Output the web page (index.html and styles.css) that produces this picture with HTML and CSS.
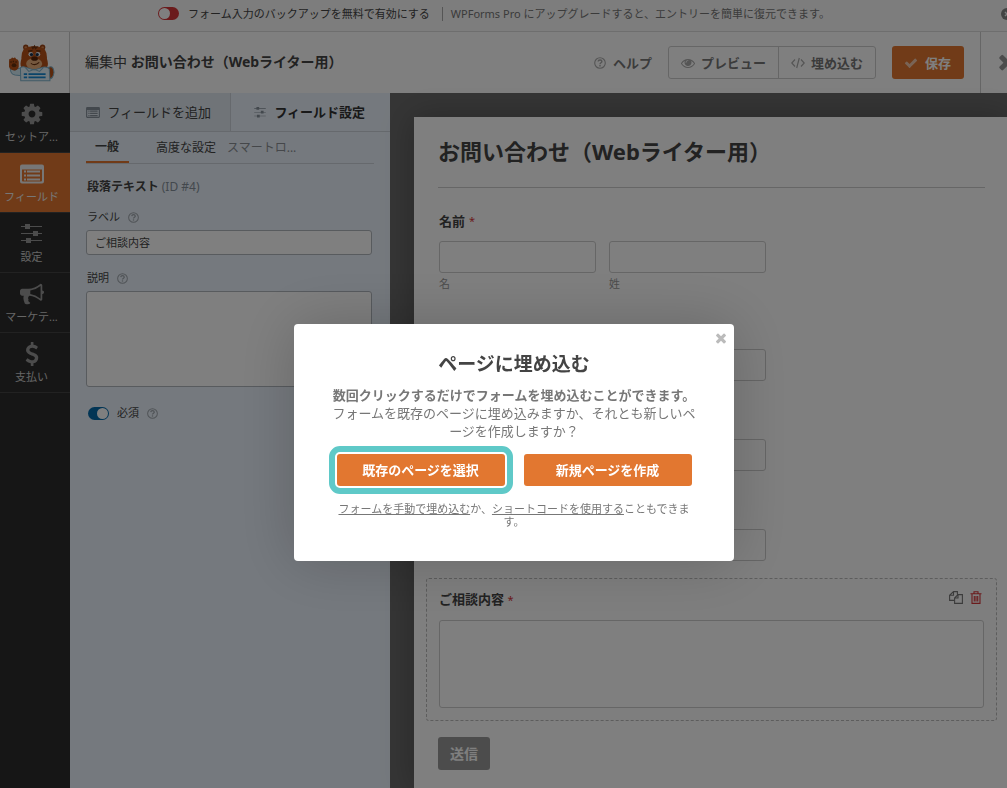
FILE: index.html
```html
<!DOCTYPE html>
<html lang="ja">
<head>
<meta charset="utf-8">
<meta name="viewport" content="width=device-width, initial-scale=1">
<title>お問い合わせ（Webライター用）</title>
<link rel="stylesheet" href="styles.css">
</head>
<body>
<svg class="sprite" aria-hidden="true">
  <symbol id="i-cog" viewBox="0 0 1792 1792"><path d="M1152 896q0-106-75-181t-181-75-181 75-75 181 75 181 181 75 181-75 75-181zm512-109v222q0 12-8 23t-20 13l-185 28q-19 54-39 91 35 50 107 138 10 12 10 25t-9 23q-27 37-99 108t-94 71q-12 0-26-9l-138-108q-44 23-91 38-16 136-29 186-7 28-36 28h-222q-14 0-24.5-8.5t-11.5-21.5l-28-184q-49-16-90-37l-141 107q-10 9-25 9-14 0-25-11-126-114-165-168-7-10-7-23 0-12 8-23 15-21 51-66.5t54-70.5q-27-50-41-99l-183-27q-13-2-21-12.5t-8-23.5v-222q0-12 8-23t19-13l186-28q14-46 39-92-40-57-107-138-10-12-10-24 0-10 9-23 26-36 98.5-107.5t94.5-71.5q13 0 26 10l138 107q44-23 91-38 16-136 29-186 7-28 36-28h222q14 0 24.5 8.5t11.5 21.5l28 184q49 16 90 37l142-107q9-9 24-9 13 0 25 10 129 119 165 170 7 8 7 22 0 12-8 23-15 21-51 66.5t-54 70.5q26 50 41 98l183 28q13 2 21 12.5t8 23.5z"/></symbol>
  <symbol id="i-usd" viewBox="0 0 1792 1792"><path d="M1362 1185q0 153-99.5 263.5t-258.5 136.5v175q0 14-9 23t-23 9h-135q-13 0-22.5-9.5t-9.5-22.5v-175q-66-9-127.5-31t-101.5-44.5-74-48-46.5-37.5-17.5-18q-17-21-2-41l103-135q7-10 23-12 15-2 24 9l2 2q113 99 243 125 37 8 74 8 81 0 142.5-43t61.5-122q0-28-15-53t-33.5-42-58.5-37.5-66-32-80-32.5q-39-16-61.5-25t-61.5-26.5-62.5-31-56.5-35.5-53.5-42.5-43.5-49-35.5-58-21-66.5-8.5-78q0-138 98-242t255-134v-180q0-13 9.5-22.5t22.5-9.5h135q14 0 23 9t9 23v176q57 6 110.5 23t87 33.5 63.5 37.5 39 29 15 14q17 18 5 38l-81 146q-8 15-23 16-14 3-27-7-3-3-14.5-12t-39-26.5-58.5-32-74.5-26-85.5-11.5q-95 0-155 43t-60 111q0 26 8.5 48t29.5 41.5 39.5 33 56 31 60.5 27 70 27.5q53 20 81 31.5t76 35 75.5 42.5 62 50 53 63.5 31.5 76.5 13 94z"/></symbol>
  <symbol id="i-horn" viewBox="0 0 1792 1792"><path d="M1664 640q53 0 90.5 37.5t37.5 90.5-37.5 90.5-90.5 37.5v384q0 52-38 90t-90 38q-417-347-812-380-58 19-91 66t-31 100.5 40 92.5q-20 33-23 65.5t6 58 33.5 55 48 50 61.5 50.5q-29 58-111.5 83t-168.5 11.5-132-55.5q-7-23-29.5-87.5t-32-94.5-23-89-15-101 3.5-98.5 22-110.5h-122q-66 0-113-47t-47-113v-192q0-66 47-113t113-47h480q435 0 896-384 52 0 90 38t38 90v384zm-128 604v-954q-394 302-768 343v270q377 42 768 341z"/></symbol>
  <symbol id="i-eye" viewBox="0 0 1792 1792"><path d="M1664 960q-152-236-381-353 61 104 61 225 0 185-131.500 316.500t-316.500 131.500-316.500-131.500-131.500-316.500q0-121 61-225-229 117-381 353 133 205 333.500 326.500t434.500 121.500 434.500-121.500 333.500-326.500zm-720-384q0-20-14-34t-34-14q-125 0-214.500 89.500t-89.500 214.500q0 20 14 34t34 14 34-14 14-34q0-86 61-147t147-61q20 0 34-14t14-34zm848 384q0 34-20 69-140 230-376.500 368.500t-499.500 138.500-499.500-139-376.500-368q-20-35-20-69t20-69q140-229 376.500-368t499.500-139 499.500 139 376.500 368q20 35 20 69z"/></symbol>
  <symbol id="i-check" viewBox="0 0 1792 1792"><path d="M1671 566q0 40-28 68l-724 724-136 136q-28 28-68 28t-68-28l-136-136-362-362q-28-28-28-68t28-68l136-136q28-28 68-28t68 28l294 295 656-657q28-28 68-28t68 28l136 136q28 28 28 68z"/></symbol>
  <symbol id="i-times" viewBox="300 300 1192 1300"><path d="M1490 1322q0 40-28 68l-136 136q-28 28-68 28t-68-28l-294-294-294 294q-28 28-68 28t-68-28l-136-136q-28-28-28-68t28-68l294-294-294-294q-28-28-28-68t28-68l136-136q28-28 68-28t68 28l294 294 294-294q28-28 68-28t68 28l136 136q28 28 28 68t-28 68l-294 294 294 294q28 28 28 68z"/></symbol>
  <symbol id="i-list" viewBox="0 0 24 19"><path fill-rule="evenodd" d="M2 0h20a2 2 0 0 1 2 2v15a2 2 0 0 1-2 2H2a2 2 0 0 1-2-2V2a2 2 0 0 1 2-2zM2 5v11q0 1 1 1h18q1 0 1-1V5z"/><path d="M4 6h2v2H4zM7 6h13v2H7zM4 10h2v2H4zM7 10h13v2H7zM4 14h2v2H4zM7 14h13v2H7z"/></symbol>
  <symbol id="i-sliders" viewBox="0 0 21 20"><path d="M0 2h21v1H0zM0 9h21v1H0zM0 16h21v1H0z"/><path d="M4 0h5v5H4zM12 7h5v5h-5zM5 14h5v5H5z"/></symbol>
  <symbol id="i-help" viewBox="0 0 12 12"><circle cx="6" cy="6" r="5.300" fill="none" stroke="currentColor" stroke-width="1.100"/><path d="M4.100 4.500C4.300 2.400 7.900 2.500 7.900 4.500 7.900 5.800 6 5.700 6 7.200" fill="none" stroke="currentColor" stroke-width="1.400"/><path d="M5.300 8h1.400v1.400H5.300z"/></symbol>
  <symbol id="i-code" viewBox="0 0 14 12"><path d="M4 2.500.8 6 4 9.500M10 2.500 13.200 6 10 9.500M8.300 1 5.700 11" fill="none" stroke="currentColor" stroke-width="1.200"/></symbol>
  <symbol id="i-copy" viewBox="0 0 14 13"><path d="M5 9.400H.6V4.300L4.500.6H8.400V3.600M4.500.6V4.300H.6M9 3.600h4.400v8.800H5.600V7zM9 3.600V7H5.600" fill="none" stroke="currentColor" stroke-width="1.100"/></symbol>
  <symbol id="i-trash" viewBox="0 0 12 13"><path d="M.5 2.700h11M4 2.500V.7h4v1.800M2 3v9.400h8V3M4.300 5v5.500M6 5v5.500M7.700 5v5.500" fill="none" stroke="currentColor" stroke-width="1.100"/></symbol>
</svg>

<div class="app">
  <div class="banner">
    <label class="backup"><input type="checkbox" class="toggle toggle-red">フォーム入力のバックアップを無料で有効にする</label>
    <span class="upgrade">WPForms Pro にアップグレードすると、エントリーを簡単に復元できます。</span>
    <button class="banner-close" aria-label="通知を閉じる"><svg viewBox="0 0 12 12"><circle cx="6" cy="6" r="6"/><path d="m4 4 4 4m0-4-4 4" stroke="#fff" stroke-width="1.500"/></svg></button>
  </div>

  <header class="topbar">
    <div class="logo">
      <svg viewBox="25 40 140 112" role="img" aria-label="WPForms">
        <circle cx="78" cy="49" r="8" fill="#9c4516"/><circle cx="128" cy="49" r="8" fill="#9c4516"/>
        <circle cx="78" cy="50" r="4" fill="#d8854c"/><circle cx="128" cy="50" r="4" fill="#d8854c"/>
        <path d="M140 112q20-14 22 12-2 18-14 20z" fill="#b95318" stroke="#80b4cd" stroke-width="3"/>
        <path d="M66 112q-16-2-20 5l-14-4q0 16 14 19l18 2z" fill="#d3eaf5" stroke="#80b4cd" stroke-width="3"/>
        <path d="M28 90q0-9 6-6 2-8 7-2 5-5 8 2 7 0 8 8v16q-4 11-14 10-12-1-15-11z" fill="#b95318"/>
        <ellipse cx="43" cy="103" rx="7" ry="6" fill="#65300f"/><path d="M34 91v4m7-6v5m8-3v4" stroke="#65300f" stroke-width="4"/>
        <path d="M72 54q31-18 62 0 8 12 7 29 8 23-6 32H72q-15-7-7-32-1-17 7-29z" fill="#b95318"/>
        <path d="M96 47l3 6 5-7 3 7 6-6" fill="none" stroke="#70320f" stroke-width="4"/>
        <path d="M79 99q0-15 24-17 23 2 24 17-4 17-24 17t-24-17z" fill="#eab17d"/>
        <circle cx="93" cy="70" r="7" fill="#edf5fa"/><circle cx="114" cy="70" r="7" fill="#edf5fa"/>
        <circle cx="95" cy="71" r="5" fill="#17314d"/><circle cx="112" cy="71" r="5" fill="#17314d"/>
        <path d="M85 61l13-2m11 0 13 2" stroke="#65300f" stroke-width="4"/>
        <ellipse cx="104" cy="83" rx="10" ry="6" fill="#592407"/>
        <path d="M93 97q13 9 25-3" fill="none" stroke="#65300f" stroke-width="3"/>
        <path d="M62 110q7-5 16-1l25 8 25-8q14-3 20 5l2 35H63z" fill="#e2f2fa" stroke="#80b4cd" stroke-width="3"/>
        <path d="M77 110l10 11 16-6 16 6 11-11" fill="none" stroke="#80b4cd" stroke-width="3"/>
        <path d="M72 129h10m4 0h51M72 139h10m4 0h51" stroke="#1689d2" stroke-width="5"/>
      </svg>
    </div>
    <p class="editing">編集中 <b>お問い合わせ（Webライター用）</b></p>
    <a class="help" href="#"><svg class="ic12"><use href="#i-help"/></svg>ヘルプ</a>
    <div class="group">
      <button class="ghost"><svg class="ic14"><use href="#i-eye"/></svg>プレビュー</button>
      <button class="ghost"><svg class="ic14"><use href="#i-code"/></svg>埋め込む</button>
    </div>
    <button class="save"><svg class="ic14"><use href="#i-check"/></svg>保存</button>
    <button class="exit" aria-label="閉じる"><svg><use href="#i-times"/></svg></button>
  </header>

  <div class="workspace">
    <nav class="side">
      <a href="#"><svg><use href="#i-cog"/></svg>セットア...</a>
      <a href="#" class="active"><svg><use href="#i-list"/></svg>フィールド</a>
      <a href="#"><svg class="narrow"><use href="#i-sliders"/></svg>設定</a>
      <a href="#"><svg><use href="#i-horn"/></svg>マーケテ...</a>
      <a href="#"><svg><use href="#i-usd"/></svg>支払い</a>
    </nav>

    <aside class="panel">
      <div class="tabs">
        <button class="tab"><svg><use href="#i-list"/></svg>フィールドを追加</button>
        <button class="tab current"><svg><use href="#i-sliders"/></svg>フィールド設定</button>
      </div>
      <div class="options">
        <div class="subtabs">
          <button class="on">一般</button><button>高度な設定</button><button class="faded">スマートロ...</button>
        </div>
        <h2>段落テキスト <span>(ID #4)</span></h2>
        <div class="option">
          <label for="f-label">ラベル <svg><use href="#i-help"/></svg></label>
          <input id="f-label" type="text" value="ご相談内容">
        </div>
        <div class="option">
          <label for="f-desc">説明 <svg><use href="#i-help"/></svg></label>
          <textarea id="f-desc"></textarea>
        </div>
        <label class="required"><input type="checkbox" class="toggle" checked>必須 <svg><use href="#i-help"/></svg></label>
      </div>
    </aside>

    <main class="preview">
      <div class="card">
        <h1>お問い合わせ（Webライター用）</h1>
        <div class="field">
          <div class="field-head">名前 <i>*</i></div>
          <div class="names">
            <div><input id="n1" type="text"><label for="n1">名</label></div>
            <div><input id="n2" type="text"><label for="n2">姓</label></div>
          </div>
        </div>
        <div class="field plain"><input type="text" aria-label="入力欄"></div>
        <div class="field plain"><input type="text" aria-label="入力欄"></div>
        <div class="field plain"><input type="text" aria-label="入力欄"></div>
        <div class="field selected">
          <div class="field-head">
            <label for="msg">ご相談内容 <i>*</i></label>
            <span class="tools">
              <button aria-label="複製"><svg><use href="#i-copy"/></svg></button>
              <button class="delete" aria-label="削除"><svg><use href="#i-trash"/></svg></button>
            </span>
          </div>
          <textarea id="msg"></textarea>
        </div>
        <button class="submit">送信</button>
      </div>
    </main>
  </div>
</div>

<div class="overlay">
  <section class="modal" role="dialog" aria-labelledby="embed-title">
    <button class="modal-close" aria-label="閉じる"><svg><use href="#i-times"/></svg></button>
    <h2 id="embed-title">ページに埋め込む</h2>
    <p class="lead"><b>数回クリックするだけでフォームを埋め込むことができます。</b><br>フォームを既存のページに埋め込みますか、それとも新しいページを作成しますか？</p>
    <div class="choices">
      <button class="picked">既存のページを選択</button>
      <button>新規ページを作成</button>
    </div>
    <p class="note"><a href="#">フォームを手動で埋め込む</a>か、<a href="#">ショートコードを使用する</a>こともできます。</p>
  </section>
</div>
</body>
</html>
```
FILE: styles.css
```css
* { box-sizing: border-box; }
body {
  margin: 0;
  overflow: hidden;
  font: 13px/16px "Noto Sans", "Noto Sans CJK JP", sans-serif;
  color: #444;
}
h1, h2, p { margin: 0; }
button, input, textarea { font: inherit; color: inherit; }
button { padding: 0; border: 0; background: none; white-space: nowrap; }
a { color: inherit; text-decoration: none; }
svg { fill: currentColor; flex: none; }
.sprite { position: absolute; width: 0; height: 0; }
.ic12 { width: 12px; height: 12px; }
.ic14 { width: 14px; height: 14px; }

.app { display: flex; flex-direction: column; min-height: 100vh; }

.toggle {
  appearance: none;
  display: flex;
  width: 21px;
  height: 13px;
  margin: 0;
  padding: 1px;
  border-radius: 7px;
  background: #056aab;
}
.toggle::before { content: ""; width: 11px; height: 11px; border-radius: 50%; background: #fff; }
.toggle:checked { justify-content: flex-end; }
.toggle-red { background: #d63638; }

.banner {
  display: flex;
  align-items: center;
  height: 32px;
  padding: 0 0 4px 158px;
  border-bottom: 1px solid #dcdcdc;
  background: #fafafa;
  font-size: 11px;
}
.backup { display: flex; align-items: center; gap: 9px; padding-right: 12px; border-right: 1px solid #aaa; line-height: 14px; white-space: nowrap; }
.upgrade { flex: 1; padding-left: 8px; color: #777; white-space: nowrap; }
.banner-close { width: 6px; height: 12px; overflow: hidden; color: #888; }
.banner-close svg { display: block; width: 12px; height: 12px; }

.topbar { display: flex; align-items: center; height: 61px; background: #fff; white-space: nowrap; }
.logo { display: flex; align-items: center; align-self: stretch; width: 70px; padding-left: 8px; border-right: 1px solid #ccc; }
.logo svg { width: 47px; height: 38px; }
.editing { flex: 1; padding-left: 15px; padding-bottom: 2px; font-size: 14px; }
.editing b { font-weight: 700; }
.help { display: flex; align-items: center; gap: 7px; margin-right: 16px; color: #777; font-weight: 700; }
.group { display: flex; margin-right: 16px; border: 1px solid #ccc; border-radius: 3px; }
.ghost { display: flex; align-items: center; gap: 6px; height: 31px; padding: 0 12px; color: #777; font-weight: 700; }
.ghost + .ghost { border-left: 1px solid #ccc; }
.help svg, .ghost svg { color: #aaa; }
.save { display: flex; align-items: center; gap: 7px; height: 33px; padding: 0 13px 0 12px; margin-right: 16px; border-radius: 3px; background: #e27730; color: #fff; font-weight: 700; }
.save svg { opacity: .6; }
.exit { align-self: stretch; display: flex; align-items: center; width: 27px; padding-left: 18px; border-left: 1px solid #ccc; overflow: hidden; color: #999; }
.exit svg { width: 16px; height: 17px; }

.workspace { flex: 1; display: flex; }
.side { width: 70px; background: #2d2d2d; }
.side a { display: flex; flex-direction: column; align-items: center; height: 60px; padding: 9px 7px 0 0; border-bottom: 1px solid #444; color: #ccc; font-size: 11px; white-space: nowrap; }
.side svg { width: 24px; height: 24px; margin-bottom: 3px; color: #999; }
.side svg.narrow { width: 21px; }
.side .active { background: #e27730; color: #eee; }
.side .active svg { color: #eee; }

.panel { width: 320px; background: #ebf3fc; }
.tabs { display: flex; }
.tab { flex: 1; display: flex; align-items: center; justify-content: center; gap: 7px; height: 39px; padding-right: 2px; border-right: 1px solid #ccd3da; border-bottom: 1px solid #ccd3da; background: #e0e8f0; }
.tab.current { border-right: 0; background: #ebf3fc; font-weight: 700; color: #333; }
.tab svg { width: 14px; height: 11px; color: #86919b; }
.options { padding: 0 16px; font-size: 11px; }
.subtabs { display: flex; border-bottom: 1px solid #ccd3da; font-size: 12px; }
.subtabs button { height: 31px; padding: 0 6px 0 5px; }
.subtabs .on { padding: 0 10px 0 9px; margin-right: 22px; border-bottom: 2px solid #e27730; font-weight: 700; }
.subtabs .faded { color: #8a8f94; }
.options h2 { padding: 15px 0 14px 1px; font-size: 12px; line-height: 16px; }
.options h2 span { color: #86919b; font-weight: 400; }
.option { padding-bottom: 15px; padding-right: 2px; }
.option label { display: flex; align-items: center; gap: 8px; padding-left: 1px; margin-bottom: 5px; }
.options label svg { width: 11px; height: 11px; color: #a0a7ae; }
.option input, .option textarea { display: block; width: 100%; border: 1px solid #b0b6bd; border-radius: 3px; background: #fff; padding: 0 8px 2px; }
.option input { height: 25px; }
.option textarea { height: 96px; resize: none; }
.required { display: flex; align-items: center; gap: 8px; padding: 3px 2px; }

.preview { flex: 1; display: flex; min-width: 0; padding: 24px 0 0 24px; background: #6b6b6b; }
.card { flex: 1; padding: 18px 10px 19px 12px; background: #fff; box-shadow: 0 0 30px rgba(0, 0, 0, .25); }
.card h1 { margin: 0 12px 12px; padding-bottom: 20px; border-bottom: 1px solid #ccc; color: #444; font-size: 22px; line-height: 32px; }
.field { margin-bottom: 4px; padding: 12px; border: 1px solid transparent; }
.field-head { display: flex; gap: 4px; margin-bottom: 12px; font-weight: 700; }
.field-head i { color: #d63638; font-size: 11px; font-style: normal; font-weight: 400; }
.field input, .field textarea { display: block; width: 100%; border: 1px solid #ccc; border-radius: 3px; background: #fff; }
.field input { height: 32px; }
.field textarea { height: 88px; resize: none; }
.names { display: grid; grid-template-columns: 1fr 1fr; gap: 13px; width: 60%; color: #999; font-size: 11px; line-height: 14px; }
.names label { display: block; margin-top: 4px; }
.plain { padding-top: 40px; }
.plain input { width: 60%; }
.selected { border: 1px dashed #bbb; border-radius: 3px; background: #fcfcfc; }
.tools { display: flex; gap: 7px; margin-left: auto; padding-right: 2px; }
.tools button { display: flex; color: #777; }
.tools svg { width: 14px; height: 13px; }
.tools .delete { color: #d63638; }
.tools .delete svg { width: 12px; }
.submit { height: 33px; margin: 12px 12px 0; padding: 0 12px; border-radius: 3px; background: #999; color: #fff; font-size: 14px; font-weight: 700; }

.overlay { position: fixed; inset: 0; display: flex; align-items: center; justify-content: center; padding: 96px 0 0 21px; background: rgba(0, 0, 0, .5); }
.modal { position: relative; width: 440px; padding: 26px 34px 33px; border-radius: 4px; background: #fff; box-shadow: 0 0 60px rgba(0, 0, 0, .2); color: #777; text-align: center; }
.modal h2 { margin-bottom: 8px; color: #444; font-size: 19px; line-height: 28px; }
.modal-close { position: absolute; top: 9px; right: 8px; color: #bbb; }
.modal-close svg { display: block; width: 10px; height: 11px; }
.lead { line-height: 18px; }
.choices { display: flex; justify-content: center; gap: 19px; margin: 14px 0 16px; }
.choices button { width: 168px; height: 32px; border-radius: 3px; background: #e27730; color: #fff; font-weight: 700; }
.choices .picked { outline: 6px solid #5fc9c8; outline-offset: 2px; }
.note { padding: 0 6px; font-size: 11px; line-height: 13px; }
.note a { text-decoration: underline; }
```
